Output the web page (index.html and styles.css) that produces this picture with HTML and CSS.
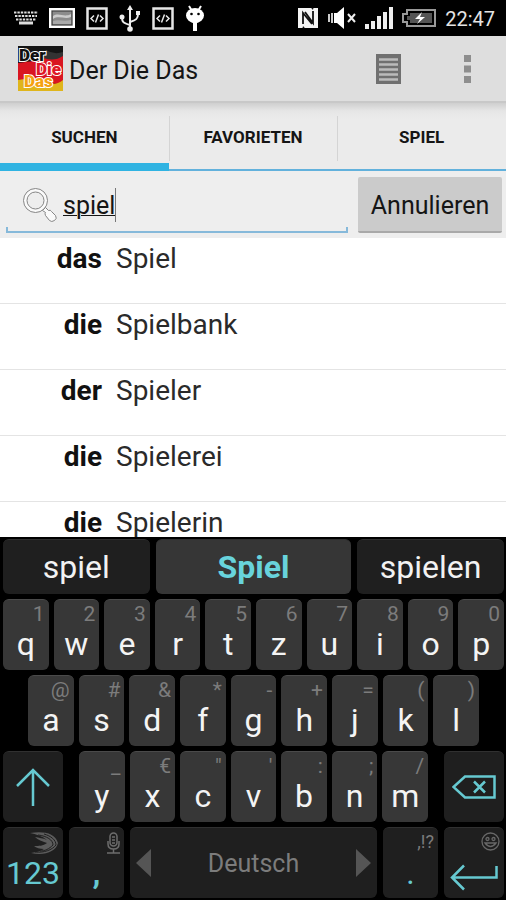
FILE: index.html
```html
<!DOCTYPE html>
<html lang="de">
<head>
<meta charset="utf-8">
<meta name="viewport" content="width=device-width, initial-scale=1">
<title>Der Die Das</title>
<link rel="stylesheet" href="styles.css">
</head>
<body>
<div class="status">
  <div class="status-group notifications">
    <svg width="24" height="14" viewBox="0 0 24 14" fill="none" stroke="#ddd" stroke-width="2"><path d="M0 1.500h24M1 5h22M2 8.500h20" stroke-dasharray="2.400 1"/><path d="M5 12h14" stroke-width="3"/></svg>
    <svg width="26" height="20" viewBox="0 0 26 20"><rect x="1" y="1" width="24" height="18" fill="#ddd" stroke="#fff" stroke-width="2"/><rect x="3" y="3" width="20" height="14" fill="#8c8c8c" stroke="#333"/><path d="M4 8c6-4 11 2 18-2v3c-6 3-12-2-18 2z" fill="#ccc"/><path d="M4 13c6-2 11 1 18-1v4H4z" fill="#aaa"/></svg>
    <svg width="22" height="23" viewBox="0 0 22 23" fill="none" stroke="#e6e6e6"><rect x="1.500" y="1.500" width="19" height="20" stroke-width="2.500"/><path d="M8 8.500L5 11.500l3 3M14 8.500l3 3-3 3M12.500 7.500l-3 8" stroke-width="1.500"/></svg>
    <svg width="22" height="27" viewBox="0 0 22 27" fill="none" stroke="#eee" stroke-width="2"><path d="M11 3v21M11 20C4 18 3 17 3 12M11 17c6-2 8-3 8-8"/><path d="M8 5l3-5 3 5z" fill="#eee" stroke="none"/><circle cx="3" cy="12" r="2.500" fill="#eee" stroke="none"/><path d="M17 6h4v4h-4z" fill="#eee" stroke="none"/><circle cx="11" cy="24" r="2.800" fill="#eee" stroke="none"/></svg>
    <svg width="22" height="23" viewBox="0 0 22 23" fill="none" stroke="#e6e6e6"><rect x="1.500" y="1.500" width="19" height="20" stroke-width="2.500"/><path d="M8 8.500L5 11.500l3 3M14 8.500l3 3-3 3M12.500 7.500l-3 8" stroke-width="1.500"/></svg>
    <svg width="20" height="27" viewBox="0 0 20 27"><path d="M4 1l3 5M16 1l-3 5" stroke="#fff" stroke-width="2"/><ellipse cx="10" cy="10.500" rx="9" ry="7.500" fill="#fff"/><path d="M3 14h14l-5 4v8H8v-8z" fill="#fff"/><circle cx="6.500" cy="9" r="1.300"/><circle cx="13.500" cy="9" r="1.300"/></svg>
  </div>
  <div class="status-group system">
    <svg width="22" height="22" viewBox="0 0 22 22"><path d="M1 1h20v20H1z" fill="#f4f4f4"/><path d="M6 17V6l9 11M16 4v12L8 5M6 21l1-1M16 1l-1 1" fill="none" stroke="#111" stroke-width="1.800"/></svg>
    <svg width="28" height="22" viewBox="0 0 28 22"><path d="M1 7v8M4 6v10" stroke="#ccc" stroke-width="2"/><path d="M6 6h3l7-6v22l-7-6H6z" fill="#fff"/><path d="M20 7l7 8M27 7l-7 8" stroke="#eee" stroke-width="2"/></svg>
    <svg width="28" height="22" viewBox="0 0 28 22" fill="#eee"><path d="M0 17h4v5H0zM6 14h4v8H6zM12 9h4v13h-4zM18 5h4v17h-4zM24 0h4v22h-4z"/></svg>
    <svg width="34" height="18" viewBox="0 0 34 18"><path d="M5 1h28v16H5v-4H1V5h4z" fill="none" stroke="#999" stroke-width="2"/><path d="M8 4h22v10H8V11H5V7h3z" fill="#555"/><path d="M20 3l-7 7h5l-3 5 8-7h-5z" fill="#fff"/></svg>
    <span class="clock">22:47</span>
  </div>
</div>

<header class="app-bar">
  <svg class="logo" width="45" height="45" viewBox="0 0 45 45" aria-hidden="true">
    <rect width="45" height="45" fill="#151515"/>
    <path d="M0 17Q14 16 28 12T45 10v28L0 37z" fill="#d91521"/>
    <path d="M0 34q13-3 25 2t20-2v11H0z" fill="#dfb51c"/>
    <path d="M28 4q8 5 17 2v4q-9 6-19 2z" fill="#333"/>
    <g class="logo-text">
      <text x="1" y="15" fill="#111">Der</text>
      <text x="18" y="29" fill="#df1726">Die</text>
      <text x="6" y="41" fill="#f5a111">Das</text>
    </g>
  </svg>
  <h1 class="title">Der Die Das</h1>
  <button class="bar-button" aria-label="Liste"><svg width="25" height="30" viewBox="0 0 25 30"><path d="M0 0h25v30H0z" fill="#707070"/><path d="M3 5.500h19M3 10.500h19M3 15.500h19M3 20.500h19M3 25.500h19" stroke="#bbb" stroke-width="2.500"/></svg></button>
  <button class="bar-button more" aria-label="Mehr"><svg width="7" height="28" viewBox="0 0 7 28" fill="#8e8e8e"><path d="M0 0h7v7H0zM0 10.500h7v7H0zM0 21h7v7H0z"/></svg></button>
</header>

<nav class="tabs">
  <button class="tab active">SUCHEN</button>
  <button class="tab">FAVORIETEN</button>
  <button class="tab">SPIEL</button>
</nav>

<form class="search">
  <label class="field">
    <svg width="34" height="34" viewBox="0 0 34 34" fill="#fafafa" stroke="#858585"><circle cx="12.500" cy="12.500" r="12"/><circle cx="12.500" cy="12.500" r="8.500" fill="#eee"/><path d="M19.500 22.500l3-3 3 3q2-1 3 1l4 4q2 3-1 5t-5 0l-4-5q-1-2 0-3z"/></svg>
    <input class="query" type="text" value="spiel" size="4" aria-label="Suchen" spellcheck="false">
  </label>
  <button class="cancel" type="button">Annulieren</button>
</form>

<ul class="results">
  <li class="result"><b class="article">das</b><span>Spiel</span></li>
  <li class="result"><b class="article">die</b><span>Spielbank</span></li>
  <li class="result"><b class="article">der</b><span>Spieler</span></li>
  <li class="result"><b class="article">die</b><span>Spielerei</span></li>
  <li class="result"><b class="article">die</b><span>Spielerin</span></li>
</ul>

<section class="keyboard" aria-label="Tastatur">
  <div class="suggestions">
    <button class="suggestion">spiel</button>
    <button class="suggestion best">Spiel</button>
    <button class="suggestion">spielen</button>
  </div>
  <div class="row">
    <button class="key"><span class="hint">1</span>q</button>
    <button class="key"><span class="hint">2</span>w</button>
    <button class="key"><span class="hint">3</span>e</button>
    <button class="key"><span class="hint">4</span>r</button>
    <button class="key"><span class="hint">5</span>t</button>
    <button class="key"><span class="hint">6</span>z</button>
    <button class="key"><span class="hint">7</span>u</button>
    <button class="key"><span class="hint">8</span>i</button>
    <button class="key"><span class="hint">9</span>o</button>
    <button class="key"><span class="hint">0</span>p</button>
  </div>
  <div class="row home-row">
    <button class="key"><span class="hint">@</span>a</button>
    <button class="key"><span class="hint">#</span>s</button>
    <button class="key"><span class="hint">&amp;</span>d</button>
    <button class="key"><span class="hint">*</span>f</button>
    <button class="key"><span class="hint">-</span>g</button>
    <button class="key"><span class="hint">+</span>h</button>
    <button class="key"><span class="hint">=</span>j</button>
    <button class="key"><span class="hint">(</span>k</button>
    <button class="key"><span class="hint">)</span>l</button>
  </div>
  <div class="row shift-row">
    <button class="key dark wide" aria-label="Umschalt"><svg width="34" height="39" viewBox="0 0 34 39" fill="none" stroke="#66c9d1" stroke-width="2.500"><path d="M17 38V2M1 18L17 2l16 16"/></svg></button>
    <div class="letters">
      <button class="key"><span class="hint">_</span>y</button>
      <button class="key"><span class="hint">€</span>x</button>
      <button class="key"><span class="hint">"</span>c</button>
      <button class="key"><span class="hint">'</span>v</button>
      <button class="key"><span class="hint">:</span>b</button>
      <button class="key"><span class="hint">;</span>n</button>
      <button class="key"><span class="hint">/</span>m</button>
    </div>
    <button class="key dark wide" aria-label="Löschen"><svg width="44" height="24" viewBox="0 0 44 24" fill="none" stroke="#66c9d1" stroke-width="2.500"><path d="M1.500 12L13 1.500h29.500v21H13zM22 6.500l11 11M33 6.500l-11 11"/></svg></button>
  </div>
  <div class="row bottom-row">
    <button class="key dark wide accent"><span class="hint"><svg width="29" height="23" viewBox="0 0 29 23"><path d="M0 1C14-1 25 1 28 11c-2 9-14 13-27 10 6-1 10-2 13-4-4 0-8-1-10-3 5 0 9 0 13-3C12 9 8 8 5 5c4 1 8 1 12 3C12 4 6 2 0 1z" fill="#5c5c5c"/><path d="M8 3c9 1 15 5 15 10M14 2c7 2 12 6 12 11M10 19c5 0 9-2 13-6M5 20c9 1 17-2 21-7" fill="none" stroke="#1f1f1f"/></svg></span>123</button>
    <button class="key dark medium accent"><span class="hint"><svg width="13" height="22" viewBox="0 0 13 22" fill="none" stroke="#6d6d6d" stroke-width="1.500"><rect x="3" y="1" width="7" height="13" rx="3.500"/><path d="M1 9v3q0 5 5.500 5T12 12V9M6.500 17v4M0 21h13M5 5h3M5 8h3M5 11h3"/></svg></span><b>,</b></button>
    <button class="key dark space">
      <svg width="15" height="28" viewBox="0 0 15 28" fill="#555"><path d="M15 0v28L0 14z"/></svg>
      <span>Deutsch</span>
      <svg width="15" height="28" viewBox="0 0 15 28" fill="#555"><path d="M0 0v28l15-14z"/></svg>
    </button>
    <button class="key dark medium accent"><span class="hint small">,!?</span>.</button>
    <button class="key dark wide enter" aria-label="Eingabe"><span class="hint"><svg width="19" height="19" viewBox="0 0 19 19" fill="none" stroke="#686868" stroke-width="1.300"><circle cx="9.500" cy="9.500" r="8.500"/><circle cx="6.500" cy="7" r="1.500"/><circle cx="12.500" cy="7" r="1.500"/><path d="M4 11q5.500 7 11 0z"/></svg></span><svg width="48" height="27" viewBox="0 0 48 27" fill="none" stroke="#66c9d1" stroke-width="2.500"><path d="M46.500 2v11.500H2M14 1.500l-12 12 12 12"/></svg></button>
  </div>
</section>
</body>
</html>
```
FILE: styles.css
```css
* { box-sizing: border-box; }

body {
  display: flex;
  flex-direction: column;
  height: 100vh;
  margin: 0;
  background: #fff;
  color: #151515;
  font-family: Roboto, "Liberation Sans", sans-serif;
}

button, input { margin: 0; padding: 0; border: 0; font: inherit; color: inherit; background: none; }
svg { display: block; flex: none; }

.status {
  display: flex;
  align-items: center;
  justify-content: space-between;
  height: 36px;
  padding: 0 11px 0 14px;
  background: #000;
  color: #e4e4e4;
}
.status-group { display: flex; align-items: center; }
.notifications { gap: 11px; }
.system { gap: 9px; }
.clock { padding-top: 2px; font-size: 20px; }

.app-bar {
  display: flex;
  align-items: center;
  height: 67px;
  padding: 0 31px 0 18px;
  background: #dedede;
  border-bottom: 2px solid #c8c8c8;
}
.logo-text {
  font-size: 17px;
  font-weight: 900;
  stroke: #fff;
  stroke-width: 2px;
  paint-order: stroke;
}
.title { flex: 1; margin: 0 0 0 6px; padding-top: 4px; font-size: 25px; font-weight: 400; }
.bar-button { padding: 4px; }
.more { margin-left: 55px; }

.tabs {
  display: grid;
  grid-template-columns: repeat(3, 1fr);
  height: 68px;
  background: linear-gradient(#cfcfcf, #e6e6e6 8px, #ebebeb 16px);
}
.tab {
  padding-top: 2px;
  border-bottom: 2px solid #62b1dc;
  background: linear-gradient(#d4d4d4, #d4d4d4) left 60% / 1px 45px no-repeat;
  font-size: 17px;
  font-weight: 700;
}
.tab.active { padding-top: 8px; border-bottom: 8px solid #2fb3e2; background: none; }

.search {
  display: flex;
  gap: 10px;
  height: 67px;
  padding: 6px 4px 5px 6px;
  background: #eee;
}
.field {
  display: flex;
  flex: 1;
  align-items: center;
  gap: 6px;
  padding: 0 0 0 17px;
  background:
    linear-gradient(#86b9da, #86b9da) left bottom / 2px 6px no-repeat,
    linear-gradient(#86b9da, #86b9da) right bottom / 2px 6px no-repeat,
    linear-gradient(#86b9da, #86b9da) left bottom / 100% 2px no-repeat;
}
.query {
  field-sizing: content;
  height: 34px;
  border-right: 1px solid #777;
  outline: 0;
  font-size: 25px;
  text-decoration: underline 1px;
}
.cancel {
  width: 144px;
  padding-top: 2px;
  border-bottom: 2px solid #a9a9a9;
  border-radius: 2px;
  background: #cbcbcb;
  font-size: 25px;
}

.results {
  flex: 1;
  min-height: 0;
  margin: 0;
  padding: 0;
  overflow: hidden;
  list-style: none;
}
.result {
  display: flex;
  gap: 14px;
  height: 66px;
  padding-top: 4px;
  border-bottom: 1px solid #e4e4e4;
  color: #2a2a2a;
  font-size: 28px;
  line-height: 34px;
}
.article { width: 102px; color: #111; text-align: right; }

.keyboard {
  display: flex;
  flex-direction: column;
  gap: 5px;
  padding: 2px 2px 2px 3px;
  background: #000;
}
.suggestions {
  display: grid;
  grid-template-columns: 3fr 4fr 3fr;
  gap: 6px;
  height: 55px;
}
.suggestion {
  border-top: 1px solid #303030;
  border-radius: 6px;
  background: #1f1f1f;
  color: #f2f2f2;
  font-size: 32px;
}
.suggestion.best { background: #363636; color: #68d3dc; font-weight: 700; }

.row, .letters { display: flex; gap: 5px; height: 71px; }
.letters { flex: 1; }
.home-row { padding: 0 25px; }
.shift-row { gap: 16px; }
.bottom-row { gap: 6px; }

.key {
  position: relative;
  display: flex;
  flex: 1;
  align-items: center;
  justify-content: center;
  min-width: 0;
  padding-top: 18px;
  border-top: 1px solid #4a4a4a;
  border-radius: 6px;
  background: #373737;
  color: #f4f4f4;
  font-size: 32px;
}
.hint {
  position: absolute;
  top: 1px;
  right: 4px;
  color: #7c7c7c;
  font-size: 21px;
  line-height: 26px;
}
.hint svg { margin-top: 3px; }
.hint.small { font-size: 18px; }
.dark { background: #1f1f1f; border-color: #303030; }
.wide { flex: 0 0 60px; padding-top: 0; }
.medium { flex: 0 0 55px; }
.accent { padding-top: 20px; color: #66c9d1; }
.space {
  justify-content: space-between;
  padding: 0 6px;
  color: #7c7c7c;
  font-size: 25px;
}
.enter { padding-top: 28px; }
```
